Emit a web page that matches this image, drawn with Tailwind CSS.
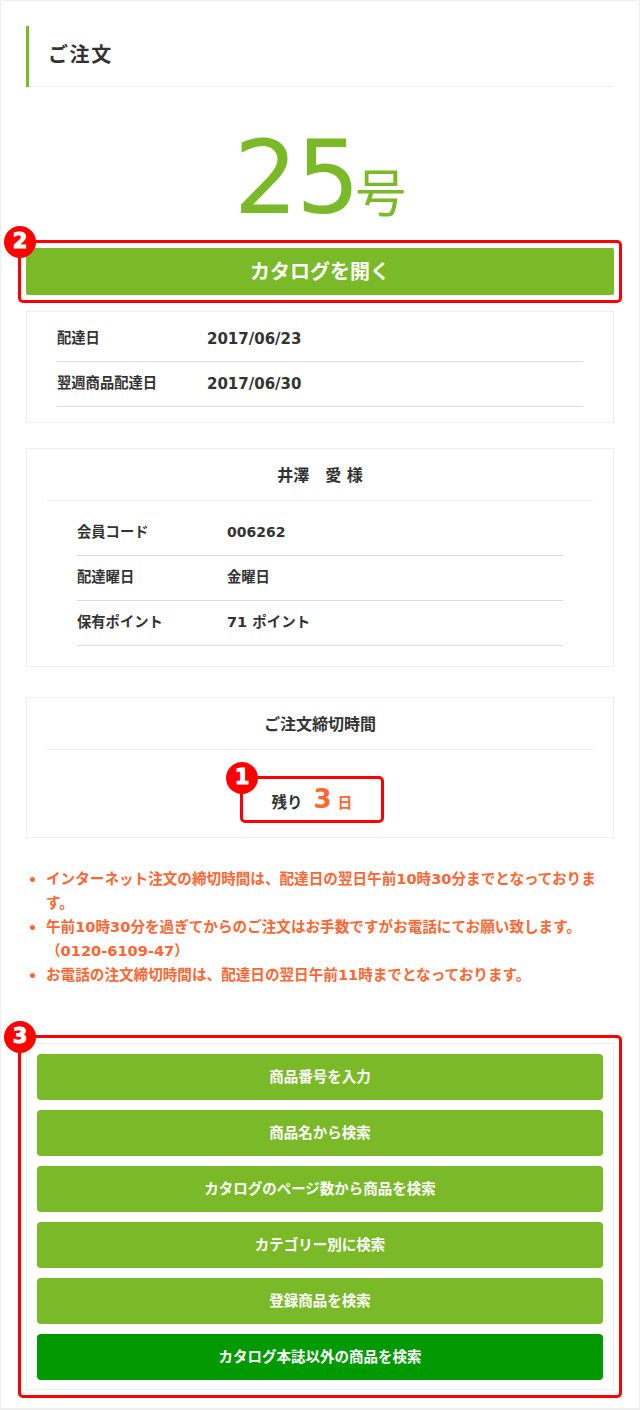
<!DOCTYPE html>
<html lang="ja"><head><meta charset="utf-8"><script src="https://cdn.jsdelivr.net/npm/@tailwindcss/browser@4"></script></head>
<body class="bg-white">
<div class="w-[640px] h-[1410px] overflow-hidden relative font-['DejaVu_Sans','Noto_Sans_CJK_JP',sans-serif] text-[#333] font-bold text-[14.5px]">
<div class="absolute inset-x-0 top-0 h-[1410px] border border-[#eee] border-b-2 pointer-events-none"></div>
<div class="pt-[26px] px-[26px]">
  <div class="h-[61px] border-l-[3px] border-[#7ab927]"><div class="h-full border-b border-[#eee] pl-[19px] pb-[2px] flex items-center text-[20px] tracking-[1.6px]">ご注文</div></div>
  <div class="h-[153px] flex items-end justify-center text-[#7ab927] font-normal pb-[11px] leading-none"><span class="text-[101px] tracking-[-2px]">25</span><span class="text-[51px] pb-[9px] ml-[-3px]">号</span></div>
  <div class="relative -mx-[8px] h-[63px] border-[3px] border-[#f00] rounded-[5px] p-[5px]">
    <div class="h-[47px] bg-[#7ab927] rounded-[2px] text-white text-[20px] flex items-center justify-center">カタログを開く</div>
    <span class="absolute left-[-17px] top-[-17px] w-[32px] h-[32px] rounded-full bg-[#f00] text-white flex items-center justify-center text-[21px] [-webkit-text-stroke:1px_white]">2</span>
  </div>
  <div class="mt-[8px] border border-[#eee] h-[112px] px-[30px] pt-[5px] text-[14.3px]">
    <div class="h-[45px] border-b border-[#ddd] flex items-center"><span class="w-[150px]">配達日</span><span class="text-[15px]">2017/06/23</span></div>
    <div class="h-[45px] border-b border-[#ddd] flex items-center"><span class="w-[150px]">翌週商品配達日</span><span class="text-[15px]">2017/06/30</span></div>
  </div>
  <div class="mt-[25px] border border-[#eee] h-[219px] px-[20px] text-[14.3px]">
    <div class="h-[52px] border-b border-[#eee] pt-[2px] flex items-center justify-center text-[16px]">井澤　愛 様</div>
    <div class="px-[30px] pt-[10px]">
      <div class="h-[45px] border-b border-[#ddd] pb-[1px] flex items-center"><span class="w-[150px]">会員コード</span><span class="text-[14px]">006262</span></div>
      <div class="h-[45px] border-b border-[#ddd] pb-[1px] flex items-center"><span class="w-[150px]">配達曜日</span><span>金曜日</span></div>
      <div class="h-[45px] border-b border-[#ddd] pb-[1px] flex items-center"><span class="w-[150px]">保有ポイント</span><span class="text-[14.5px]">71 ポイント</span></div>
    </div>
  </div>
  <div class="mt-[30px] border border-[#eee] h-[141px] px-[20px]">
    <div class="h-[52px] border-b border-[#eee] pt-[3px] flex items-center justify-center text-[16px]">ご注文締切時間</div>
    <div class="flex justify-center pt-[26px] pr-[16px]">
      <div class="relative w-[144px] h-[47px] border-[3px] border-[#f00] rounded-[5px] flex items-baseline justify-center pt-[1px] text-[15.5px]"><span>残り</span><span class="text-[#ff6633] text-[26px] ml-[11px]">3</span><span class="text-[#ff6633] text-[15px] ml-[6px]">日</span>
        <span class="absolute left-[-17px] top-[-17px] w-[32px] h-[32px] rounded-full bg-[#f00] text-white flex items-center justify-center text-[21px] [-webkit-text-stroke:1px_white]">1</span>
      </div>
    </div>
  </div>
  <ul class="mt-[29px] text-[#ff6633] text-[14.6px] leading-[24px] pl-[20px] list-disc">
    <li>インターネット注文の締切時間は、配達日の翌日午前10時30分までとなっております。</li>
    <li>午前10時30分を過ぎてからのご注文はお手数ですがお電話にてお願い致します。（0120-6109-47）</li>
    <li>お電話の注文締切時間は、配達日の翌日午前11時までとなっております。</li>
  </ul>
  <div class="relative -mx-[8px] mt-[48px] h-[363px] border-[3px] border-[#f00] rounded-[5px] p-[5px] text-white">
    <div class="h-[347px] border border-[#eee] p-[10px] flex flex-col gap-[10px]">
      <div class="h-[46px] shrink-0 bg-[#7ab927] rounded-[4px] pt-[2px] flex items-center justify-center">商品番号を入力</div>
      <div class="h-[46px] shrink-0 bg-[#7ab927] rounded-[4px] pt-[2px] flex items-center justify-center">商品名から検索</div>
      <div class="h-[46px] shrink-0 bg-[#7ab927] rounded-[4px] pt-[2px] flex items-center justify-center">カタログのページ数から商品を検索</div>
      <div class="h-[46px] shrink-0 bg-[#7ab927] rounded-[4px] pt-[2px] flex items-center justify-center">カテゴリー別に検索</div>
      <div class="h-[46px] shrink-0 bg-[#7ab927] rounded-[4px] pt-[2px] flex items-center justify-center">登録商品を検索</div>
      <div class="h-[46px] shrink-0 bg-[#009900] rounded-[4px] pt-[2px] flex items-center justify-center">カタログ本誌以外の商品を検索</div>
    </div>
    <span class="absolute left-[-17px] top-[-17px] w-[32px] h-[32px] rounded-full bg-[#f00] text-white flex items-center justify-center text-[21px] [-webkit-text-stroke:1px_white]">3</span>
  </div>
</div>
</div>
</body></html>
